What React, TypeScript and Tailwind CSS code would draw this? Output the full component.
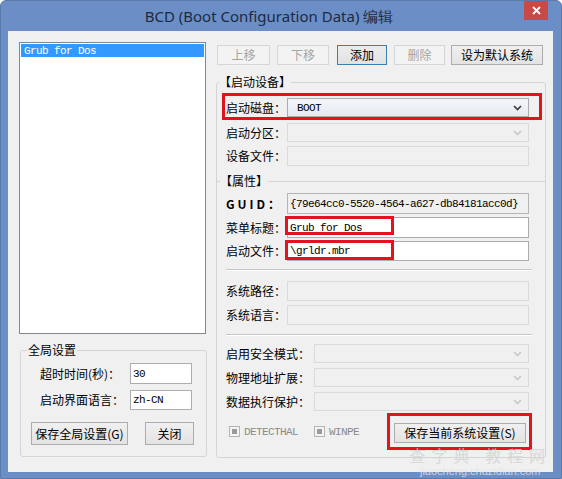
import React from 'react'

const cjk = "font-['Noto_Sans_CJK_SC',sans-serif] text-[12px] leading-[16px]"
const mono = "font-['Liberation_Mono','Noto_Sans_CJK_SC',monospace] text-[11px] tracking-[-0.6px] leading-[14px]"

function Btn({
  children,
  disabled,
  primary,
  className = '',
}: {
  children: React.ReactNode
  disabled?: boolean
  primary?: boolean
  className?: string
}) {
  const look = disabled
    ? 'border-[#d6d6d6] bg-[#f3f3f3] text-[#a4a4a4]'
    : primary
      ? 'border-[#3c7fb1] bg-gradient-to-b from-[#ececec] to-[#e2e2e2] text-black'
      : 'border-[#adadad] bg-gradient-to-b from-[#f0f0f0] to-[#e3e3e3] text-black'
  return (
    <div className={`flex items-center justify-center border ${look} ${cjk} ${className}`}>
      {children}
    </div>
  )
}

function Chevron({ disabled }: { disabled?: boolean }) {
  return (
    <svg width="9" height="6" viewBox="0 0 9 6" className="mr-[6px] shrink-0">
      <path
        d="M1 1 L4.5 4.5 L8 1"
        fill="none"
        stroke={disabled ? '#c8c8c8' : '#3a3a3a'}
        strokeWidth="1.7"
      />
    </svg>
  )
}

function Select({ value, disabled, className = '' }: { value?: string; disabled?: boolean; className?: string }) {
  return (
    <div
      className={`flex h-[19px] items-center border ${
        disabled ? 'border-[#dadada] bg-[#f0f0f0]' : 'border-[#acacac] bg-gradient-to-b from-[#f3f5f8] to-[#e6eaf0]'
      } ${className}`}
    >
      <span className={`flex-1 pl-[9px] text-black ${mono}`}>{value}</span>
      <Chevron disabled={disabled} />
    </div>
  )
}

function Field({
  value,
  kind,
  className = '',
  children,
}: {
  value?: string
  kind: 'off' | 'ro' | 'on'
  className?: string
  children?: React.ReactNode
}) {
  const look =
    kind === 'off'
      ? 'border-[#dadada] bg-[#f0f0f0]'
      : kind === 'ro'
        ? 'border-[#b5b5b5] bg-[#f0f0f0]'
        : 'border-[#abadb3] bg-white'
  return (
    <div className={`relative flex items-center border ${look} ${className}`}>
      <span className={`pl-[2px] text-black ${mono}`}>{value}</span>
      {children}
    </div>
  )
}

function Label({ children, className = '' }: { children: React.ReactNode; className?: string }) {
  return <span className={`shrink-0 text-black ${cjk} ${className}`}>{children}</span>
}

function Sep() {
  return <div className="ml-[9px] h-[2px] w-[306px] border-t border-b border-t-[#c6c6c6] border-b-white" />
}

function Check({ label, className = '' }: { label: string; className?: string }) {
  return (
    <div className={`flex items-center ${className}`}>
      <div className="flex h-[11px] w-[11px] items-center justify-center border border-[#b4b4b4] bg-[#f4f4f4]">
        <div className="h-[5px] w-[5px] bg-[#9a9a9a]" />
      </div>
      <span className={`ml-[4px] text-[#8a8a8a] ${mono}`}>{label}</span>
    </div>
  )
}

export default function App() {
  return (
    <div className="relative flex h-[479px] w-[562px] flex-col overflow-hidden rounded-t-[6px] border border-[#5a7aab] bg-[#6b8ec6]">
      {/* Title bar */}
      <div className="relative flex h-[30px] shrink-0 items-center justify-center pr-[24px]">
        <span className="font-['Noto_Sans',sans-serif] text-[15px] leading-[20px] text-[#1d2a42]">
          BCD (Boot Configuration Data) 编辑
        </span>
        <div className="absolute right-[13px] top-[-1px] flex h-[20px] w-[24px] items-center justify-center bg-[#c74a47]">
          <svg width="9" height="9" viewBox="0 0 9 9">
            <path d="M1 1 L8 8 M8 1 L1 8" stroke="white" strokeWidth="1.8" />
          </svg>
        </div>
      </div>

      {/* Client area */}
      <div className="ml-[7px] flex h-[441px] w-[545px] bg-[#f0f0f0]">
        {/* Left column */}
        <div className="flex w-[204px] shrink-0 flex-col pl-[11px] pt-[11px]">
          <div className="h-[292px] w-[187px] border border-[#828790] bg-white p-[1px]">
            <div className={`flex h-[13px] items-center bg-[#3399ff] pl-[3px] text-white ${mono}`}>Grub for Dos</div>
          </div>

          <div className="ml-[1px] mt-[16px] h-[107px] w-[187px] rounded-[3px] border border-[#d5d5d5]">
            <div className={`-mt-[9px] ml-[6px] w-fit bg-[#f0f0f0] px-[1px] ${cjk} text-black`}>全局设置</div>
            <div className="mt-[5px] flex items-center pl-[19px]">
              <Label className="w-[90px]">超时时间(秒)：</Label>
              <Field kind="on" value="30" className="h-[21px] w-[62px]" />
            </div>
            <div className="mt-[6px] flex items-center pl-[19px]">
              <Label className="w-[90px]">启动界面语言：</Label>
              <Field kind="on" value="zh-CN" className="h-[20px] w-[62px]" />
            </div>
            <div className="mt-[12px] flex items-center pl-[10px]">
              <Btn className="h-[23px] w-[97px]">保存全局设置(G)</Btn>
              <Btn className="ml-[17px] h-[23px] w-[49px]">关闭</Btn>
            </div>
          </div>
        </div>

        {/* Right column */}
        <div className="flex flex-1 flex-col pl-[4px] pt-[14px]">
          <div className="ml-[1px] flex items-center">
            <Btn disabled className="h-[20px] w-[53px]">上移</Btn>
            <Btn disabled className="ml-[7px] h-[20px] w-[52px]">下移</Btn>
            <Btn primary className="ml-[8px] h-[20px] w-[50px]">添加</Btn>
            <Btn disabled className="ml-[7px] h-[20px] w-[51px]">删除</Btn>
            <Btn className="ml-[6px] h-[20px] w-[92px]">设为默认系统</Btn>
          </div>

          <div className="mt-[17px] h-[376px] w-[330px] rounded-[3px] border border-[#d5d5d5]">
            <div className={`-mt-[9px] ml-[2px] w-fit bg-[#f0f0f0] ${cjk} text-black`}>【启动设备】</div>

            {/* boot disk, marked */}
            <div className="ml-[5px] mt-[3px] w-[320px] border-[3px] border-[#e3121c] pl-[1px] pt-[2px]">
              <div className="flex h-[19px] items-center">
                <Label className="w-[61px]">启动磁盘：</Label>
                <Select value="BOOT" className="w-[242px]" />
              </div>
            </div>

            <div className="mt-[3px] flex h-[19px] items-center pl-[9px]">
              <Label className="w-[61px]">启动分区：</Label>
              <Select disabled className="w-[242px]" />
            </div>
            <div className="mt-[4px] flex h-[20px] items-center pl-[9px]">
              <Label className="w-[61px]">设备文件：</Label>
              <Field kind="off" className="h-[20px] w-[242px]" />
            </div>

            <div className="mt-[7px] flex h-[16px] items-center">
              <div className="w-[3px] border-t border-[#d5d5d5]" />
              <span className={`${cjk} text-black`}>【属性】</span>
              <div className="flex-1 border-t border-[#d5d5d5]" />
            </div>

            <div className="mt-[4px] flex h-[21px] items-center pl-[9px]">
              <Label className="w-[61px] font-bold tracking-[3px]">GUID：</Label>
              <Field kind="ro" value="{79e64cc0-5520-4564-a627-db84181acc0d}" className="h-[21px] w-[242px]" />
            </div>
            <div className="mt-[3px] flex h-[21px] items-center pl-[9px]">
              <Label className="w-[61px]">菜单标题：</Label>
              <Field kind="on" value="Grub for Dos" className="h-[21px] w-[242px]">
                <div className="absolute left-[-3px] top-[-2px] h-[19px] w-[109px] border-[3px] border-[#e3121c]" />
              </Field>
            </div>
            <div className="mt-[3px] flex h-[20px] items-center pl-[9px]">
              <Label className="w-[61px]">启动文件：</Label>
              <Field kind="on" value="\grldr.mbr" className="h-[20px] w-[242px]">
                <div className="absolute left-[-3px] top-[-2px] h-[20px] w-[109px] border-[3px] border-[#e3121c]" />
              </Field>
            </div>

            <div className="mt-[8px]">
              <Sep />
            </div>

            <div className="mt-[10px] flex h-[20px] items-center pl-[9px]">
              <Label className="w-[61px]">系统路径：</Label>
              <Field kind="off" className="h-[20px] w-[242px]" />
            </div>
            <div className="mt-[4px] flex h-[20px] items-center pl-[9px]">
              <Label className="w-[61px]">系统语言：</Label>
              <Field kind="off" className="h-[20px] w-[242px]" />
            </div>

            <div className="mt-[9px]">
              <Sep />
            </div>

            <div className="mt-[8px] flex h-[19px] items-center pl-[9px]">
              <Label className="w-[88px]">启用安全模式：</Label>
              <Select disabled className="w-[215px]" />
            </div>
            <div className="mt-[5px] flex h-[19px] items-center pl-[9px]">
              <Label className="w-[88px]">物理地址扩展：</Label>
              <Select disabled className="w-[215px]" />
            </div>
            <div className="mt-[5px] flex h-[19px] items-center pl-[9px]">
              <Label className="w-[88px]">数据执行保护：</Label>
              <Select disabled className="w-[215px]" />
            </div>

            <div className="mt-[2px] flex items-center">
              <Check label="DETECTHAL" className="ml-[12px] w-[85px]" />
              <Check label="WINPE" className="w-[73px]" />
              <div className="border-[3px] border-[#e3121c] pb-[4px] pl-[4px] pr-[3px] pt-[7px]">
                <Btn className="h-[20px] w-[132px]">保存当前系统设置(S)</Btn>
              </div>
            </div>
          </div>
        </div>
      </div>

      {/* watermark */}
      <div className="pointer-events-none absolute bottom-[1px] right-[10px] flex flex-col items-center gap-[1px] opacity-80">
        <span className="font-['Noto_Sans_CJK_SC',sans-serif] text-[16px] leading-[18px] tracking-[6px] text-[#d4d4d4]">
          查字典 教程网
        </span>
        <span className="font-['Liberation_Sans',sans-serif] text-[11px] leading-[12px] text-[#e4e4e4]">
          jiaocheng.chazidian.com
        </span>
      </div>
    </div>
  )
}
